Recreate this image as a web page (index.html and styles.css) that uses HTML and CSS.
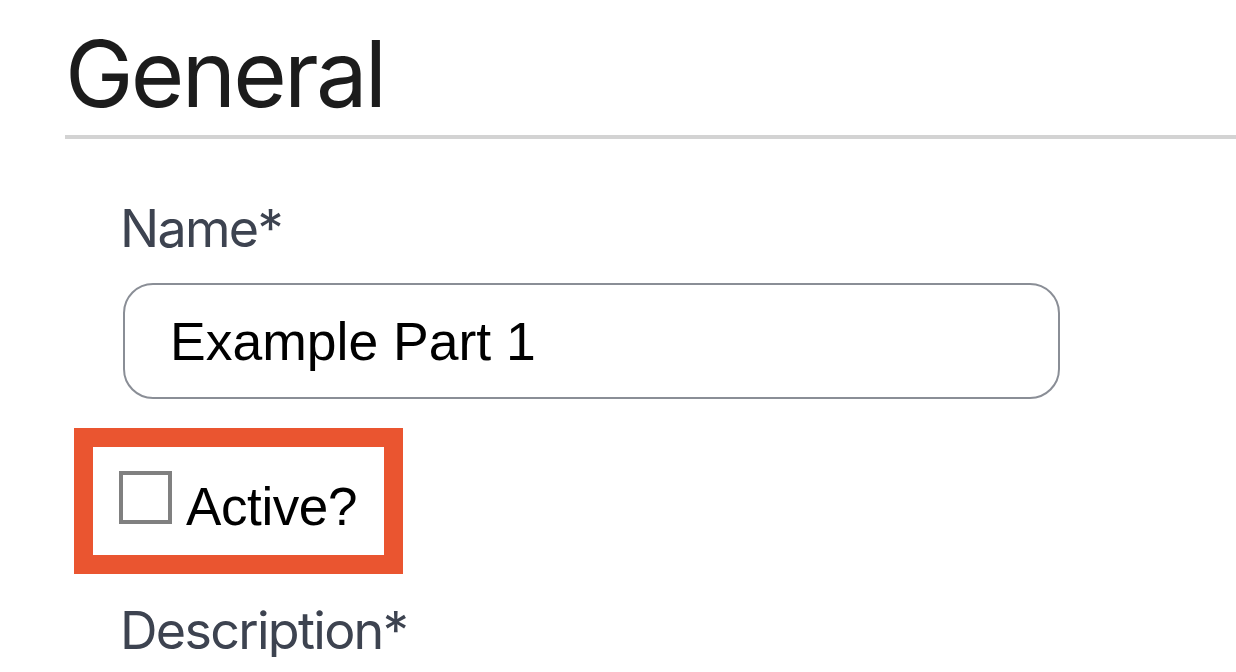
FILE: index.html
```html
<!DOCTYPE html>
<html lang="en">
<head>
<meta charset="utf-8">
<title>General</title>
<link rel="stylesheet" href="styles.css">
</head>
<body>
<main class="page">
  <h1 class="section-title">General</h1>
  <hr class="divider">
  <form class="form">
    <label class="field-label" for="name">Name*</label>
    <input class="text-input" id="name" type="text" value="Example Part 1">
    <div class="highlight">
      <label class="check-row">
        <input class="check" type="checkbox">
        <span class="check-text">Active?</span>
      </label>
    </div>
    <label class="field-label desc-label" for="desc">Description*</label>
  </form>
</main>
</body>
</html>
```

FILE: styles.css
```css
html, body {
  margin: 0;
  padding: 0;
  background: #ffffff;
  overflow: hidden;
}

.page {
  padding-left: 65px;
  padding-top: 28px;
}

.section-title {
  margin: 0;
  font-family: "Inter", "Liberation Sans", sans-serif;
  font-weight: 400;
  font-size: 92px;
  line-height: 92px;
  height: 92px;
  color: #1c1c1c;
  letter-spacing: -2.8px;
}

.divider {
  margin: 15px 0 0 0;
  border: 0;
  height: 4px;
  background: #d3d3d3;
}

.form {
  display: flex;
  flex-direction: column;
  align-items: flex-start;
  padding-left: 55px;
  padding-top: 64px;
}

.field-label {
  font-family: "Inter", "Liberation Sans", sans-serif;
  font-size: 52px;
  line-height: 52px;
  color: #3d4350;
  letter-spacing: -1.7px;
}

.text-input {
  margin: 28px 0 0 3px;
  box-sizing: border-box;
  width: 937px;
  height: 116px;
  border: 2px solid #8a8e96;
  border-radius: 30px;
  padding: 0 0 0 45px;
  font-family: "Liberation Sans", Arial, sans-serif;
  font-size: 53.5px;
  color: #000000;
  background: #ffffff;
  outline: none;
}

.highlight {
  margin: 29px 0 0 -46px;
  box-sizing: border-box;
  width: 329px;
  height: 146px;
  border: 19px solid #ea5530;
  padding: 24px 0 0 26px;
}

.check-row {
  display: flex;
  align-items: flex-start;
  gap: 14px;
}

.check {
  appearance: none;
  -webkit-appearance: none;
  margin: 0;
  box-sizing: border-box;
  width: 53px;
  height: 53px;
  border: 4px solid #808080;
  background: #ffffff;
}

.check-text {
  margin-top: 9px;
  font-family: "Liberation Sans", Arial, sans-serif;
  font-size: 53px;
  line-height: 53px;
  color: #000000;
  letter-spacing: -0.4px;
}

.desc-label {
  margin-top: 31px;
}
```
